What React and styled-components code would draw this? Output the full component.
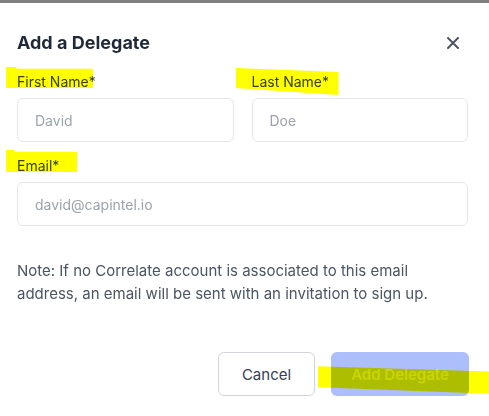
import React from "react";
import styled, { createGlobalStyle } from "styled-components";

const GlobalStyle = createGlobalStyle`
  * { box-sizing: border-box; }
  html, body { margin: 0; padding: 0; background: #7f7f7f; }
  body { font-family: Inter, "Noto Sans", sans-serif; }
`;

const Backdrop = styled.div`
  padding-top: 3px;
  min-height: 100vh;
`;

const Modal = styled.div`
  background: #ffffff;
  min-height: 413px;
  padding: 26px 21px 20px 17px;
`;

const Header = styled.div`
  display: flex;
  align-items: center;
  justify-content: space-between;
  height: 28px;
`;

const Title = styled.h2`
  margin: 0;
  font-size: 18px;
  line-height: 28px;
  font-weight: 700;
  color: #1f2937;
`;

const CloseButton = styled.button`
  width: 24px;
  height: 24px;
  margin-right: 3px;
  padding: 0;
  border: none;
  background: transparent;
  display: flex;
  align-items: center;
  justify-content: center;
  cursor: pointer;
`;

const Form = styled.form`
  margin-top: 15px;
  display: flex;
  flex-direction: column;
  gap: 14px;
`;

const Row = styled.div`
  display: grid;
  grid-template-columns: 1fr 1fr;
  gap: 18px;
`;

const Field = styled.div`
  display: flex;
  flex-direction: column;
  gap: 6px;
`;

const Label = styled.label`
  position: relative;
  font-size: 14px;
  line-height: 20px;
  font-weight: 400;
  color: #374151;
`;

const Input = styled.input`
  height: 44px;
  width: 100%;
  padding: 0 17px;
  border: 1px solid #e5e7eb;
  border-radius: 6px;
  font-family: Inter, "Noto Sans", sans-serif;
  font-size: 14px;
  color: #111827;
  outline: none;

  &::placeholder {
    color: #9ca3af;
  }
`;

const Note = styled.p`
  margin: 34px 0 0;
  font-size: 15px;
  line-height: 22.5px;
  color: #4b5563;
`;

const Footer = styled.div`
  display: flex;
  justify-content: flex-end;
  gap: 16px;
  margin-top: 47px;
  margin-right: -1px;
`;

const Button = styled.button`
  position: relative;
  height: 44px;
  padding: 0;
  white-space: nowrap;
  border-radius: 6px;
  font-family: Inter, "Noto Sans", sans-serif;
  font-size: 15px;
  font-weight: ${(p) => (p.$primary ? 600 : 400)};
  color: ${(p) => (p.$primary ? "#cbd5fe" : "#374151")};
  background: ${(p) => (p.$primary ? "#adbefc" : "#ffffff")};
  border: ${(p) => (p.$primary ? "none" : "1px solid #d1d5db")};
  width: ${(p) => (p.$primary ? "138px" : "97px")};
  cursor: pointer;
`;

const Highlight = styled.span`
  position: absolute;
  left: ${(p) => p.$left}px;
  top: ${(p) => p.$top}px;
  width: ${(p) => p.$w}px;
  height: ${(p) => p.$h}px;
  background: #ffff00;
  mix-blend-mode: multiply;
  pointer-events: none;
  clip-path: ${(p) => p.$clip || "none"};
`;

const tabClip = "polygon(0 0, 12% 0, 12% 8%, 100% 8%, 100% 100%, 0 100%)";

export default function App() {
  return (
    <>
      <GlobalStyle />
      <Backdrop>
        <Modal>
          <Header>
            <Title>Add a Delegate</Title>
            <CloseButton type="button" aria-label="Close">
              <svg width="12" height="12" viewBox="0 0 12 12">
                <path
                  d="M1 1L11 11M11 1L1 11"
                  stroke="#4b5563"
                  strokeWidth="2"
                  strokeLinecap="round"
                />
              </svg>
            </CloseButton>
          </Header>

          <Form onSubmit={(e) => e.preventDefault()}>
            <Row>
              <Field>
                <Label>
                  First Name*
                  <Highlight $left={-11} $top={-5} $w={87} $h={21} $clip={tabClip} />
                </Label>
                <Input placeholder="David" />
              </Field>
              <Field>
                <Label>
                  Last Name*
                  <Highlight
                    $left={-16}
                    $top={-4}
                    $w={103}
                    $h={27}
                    $clip="polygon(0 0, 100% 15%, 100% 100%, 0 74%)"
                  />
                </Label>
                <Input placeholder="Doe" />
              </Field>
            </Row>

            <Field>
              <Label>
                Email*
                <Highlight $left={-11} $top={-6} $w={71} $h={22} $clip={tabClip} />
              </Label>
              <Input placeholder="david@capintel.io" />
            </Field>
          </Form>

          <Note>
            Note: If no Correlate account is associated to this email address, an
            email will be sent with an invitation to sign up.
          </Note>

          <Footer>
            <Button type="button">Cancel</Button>
            <Button type="button" $primary>
              Add Delegate
              <Highlight
                $left={-13}
                $top={13}
                $w={171}
                $h={30}
                $clip="polygon(0 4%, 100% 22%, 100% 96%, 0 74%)"
              />
            </Button>
          </Footer>
        </Modal>
      </Backdrop>
    </>
  );
}
